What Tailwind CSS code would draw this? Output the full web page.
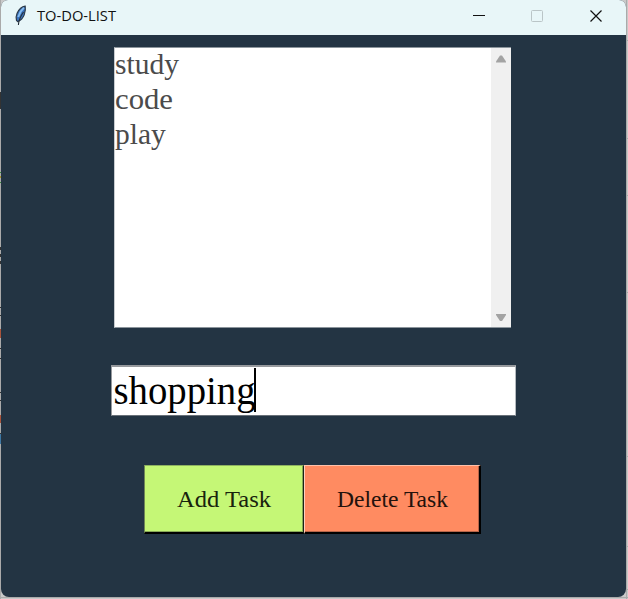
<!DOCTYPE html>
<html lang="en">
<head>
<meta charset="utf-8">
<title>TO-DO-LIST</title>
<script src="https://cdn.jsdelivr.net/npm/@tailwindcss/browser@4"></script>
</head>
<body class="relative h-[599px] w-[628px] overflow-hidden bg-[#c9c9c9] font-['Liberation_Serif',serif]">
<!-- Slivers of the desktop visible beside the window -->
<svg class="absolute inset-0" width="628" height="599" shape-rendering="crispEdges">
  <path fill="#aaa" d="M0 0h1v599H0zM626 0h1v599h-1zM0 597h628v1H0z"/>
  <path fill="#333" d="M0 92h1v17H0zM0 247h1v3H0zM0 254h1v3H0zM0 261h1v3H0zM0 307h1v1H0zM0 315h1v1H0zM0 348h1v1H0zM0 358h1v1H0zM0 392h1v1H0zM0 400h1v1H0zM0 433h1v1H0z"/>
  <path fill="#388b3c" d="M0 172h1v1H0zM0 182h1v1H0z"/><path fill="#a5942c" d="M0 176h1v2H0z"/>
  <path fill="#a9533a" d="M0 329h1v9H0zM0 415h1v8H0z"/><path fill="#3e78a4" d="M0 434h1v10H0z"/>
  <path fill="#aaa" d="M627 40h1v1h-1zM627 138h1v1h-1zM627 195h1v1h-1zM627 292h1v1h-1zM627 456h1v1h-1zM627 546h1v1h-1zM627 589h1v1h-1z"/>
</svg>
<div class="relative ml-px flex h-[597px] w-[625px] flex-col overflow-hidden rounded-t-[7px] rounded-b-[8px] bg-[#233443]">
  <header class="flex h-[35px] shrink-0 items-center bg-[#e8f6f8] font-['Open_Sans',sans-serif]">
    <svg class="ml-[13px] mb-[5px] shrink-0" width="14" height="22" viewBox="0 0 14 22">
      <path d="M11.2 2.2C8 2.7 4.8 5.6 3.1 9.3c-1 2.3-1.2 4.9-.6 7.1l1.2 1.2c2.7-1 5.3-3.6 6.5-6.7.9-2.6 1.5-6 1-8.7Z" fill="#3a72bd" stroke="#2d3b4a" stroke-width="1.2"/>
      <path d="M9.9 3.8C7 6.3 5.3 9.2 4.2 13" fill="none" stroke="#86bdf0" stroke-width="1.8"/>
      <path d="M9.5 8C7.3 11 4.9 14.4 4.4 21" fill="none" stroke="#26303a" stroke-width="1.1"/>
    </svg>
    <svg class="ml-[8px] shrink-0" width="90" height="35"><text x="1" y="21" textLength="79" lengthAdjust="spacingAndGlyphs" font-size="14.7" fill="#111">TO-DO-LIST</text></svg>
    <svg class="ml-auto shrink-0" width="153" height="35" fill="none">
      <path d="M0 15.5h12" stroke="#111" shape-rendering="crispEdges"/>
      <rect x="58.5" y="10.5" width="11" height="11" rx="1" stroke="#bac5c7"/>
      <path d="m117.5 10.5 11 11m0-11-11 11" stroke="#111" stroke-width="1.2"/>
    </svg>
  </header>
  <main class="flex flex-col">
    <div class="mt-[12px] ml-[113px] flex h-[281px] w-[397px] border-y border-l border-[#8b949b] border-l-[#c8ccd0] bg-white">
      <ul class="relative -top-px grow text-[29.5px] leading-[35px] text-[#4b4b4b]">
        <li>study</li><li><svg class="block" width="80" height="35"><text x="0" y="27" textLength="58" lengthAdjust="spacingAndGlyphs" fill="#4b4b4b">code</text></svg></li><li>play</li>
      </ul>
      <svg class="h-full w-[20px] shrink-0 bg-[#f0f0f0]" width="20" height="279">
        <path d="M9 7.5h2l4 6v1H5v-1z" fill="#a3a3a3"/>
        <path d="M5 266h10v1l-4 6H9l-4-6z" fill="#a3a3a3"/>
      </svg>
    </div>
    <div class="mt-[37px] ml-[110px] flex h-[51px] w-[405px] border border-t-2 border-[#687078] border-t-[#96999d] border-r-[#b5babf] border-l-[#96999d] bg-white pl-px">
      <svg width="180" height="48"><text x="0.5" y="36.5" font-size="39" textLength="142" lengthAdjust="spacingAndGlyphs" fill="#000">shopping</text><path d="M141 1h2v44h-2z" fill="#000"/></svg>
    </div>
    <div class="mt-[49px] ml-[143px] flex h-[69px] text-[#111]">
      <div class="h-[69px] w-[160px] border border-b-2 border-t-[#8eb160] border-r-[#182416] border-b-black border-l-[#6f8756]">
        <div class="h-full border-r border-b border-[#88a956] bg-[#c5f776]"><svg width="157" height="65"><text x="32" y="41" font-size="24" textLength="94" lengthAdjust="spacingAndGlyphs" fill="#18230d">Add Task</text></svg></div>
      </div>
      <div class="h-[69px] w-[177px] border border-r-2 border-b-2 border-t-[#ffc1aa] border-r-black border-b-black border-l-[#ffd0bf]">
        <div class="h-full border-r border-b border-[#b66448] bg-[#ff8b61]"><svg width="173" height="65"><text x="32" y="41" font-size="24" textLength="111" lengthAdjust="spacingAndGlyphs" fill="#23120c">Delete Task</text></svg></div>
      </div>
    </div>
  </main>
</div>
</body>
</html>
